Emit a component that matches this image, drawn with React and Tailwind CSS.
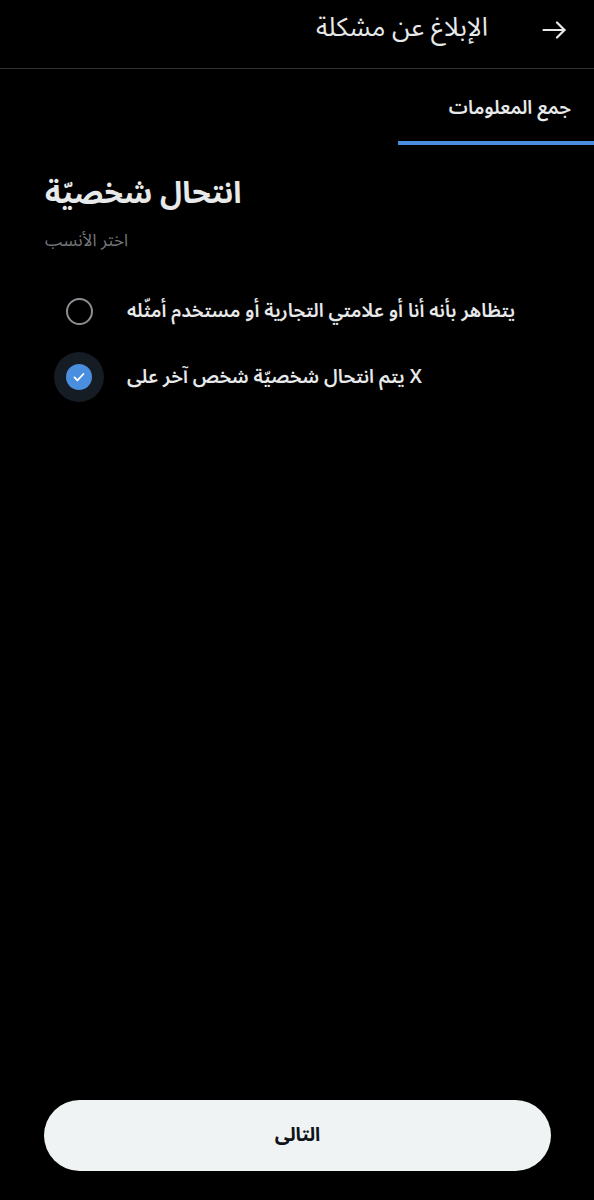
import React from "react";

const font = { fontFamily: '"Noto Sans Arabic", "DejaVu Sans", "Noto Sans", sans-serif' };

function Arrow() {
  return (
    <svg width="24" height="18" viewBox="0 0 24 18" fill="none" stroke="#e7e9ea" strokeWidth="2.2" strokeLinecap="round" strokeLinejoin="round">
      <path d="M1.5 9h21" />
      <path d="M15 1.5l7.5 7.5-7.5 7.5" />
    </svg>
  );
}

function Radio({ checked }) {
  if (checked) {
    return (
      <div className="w-[50px] h-[50px] rounded-full bg-[#151c24] flex items-center justify-center shrink-0">
        <div className="w-[26px] h-[26px] rounded-full bg-[#4a8fdf] flex items-center justify-center">
          <svg width="14" height="14" viewBox="0 0 14 14" fill="none" stroke="#ffffff" strokeWidth="1.8" strokeLinecap="round" strokeLinejoin="round">
            <path d="M2.5 7.4l2.9 2.9 6-6.3" />
          </svg>
        </div>
      </div>
    );
  }
  return (
    <div className="w-[50px] h-[50px] flex items-center justify-center shrink-0">
      <div className="w-[27px] h-[27px] rounded-full border-[2px] border-[#8b8e92]" />
    </div>
  );
}

export default function App() {
  return (
    <div className="w-[594px] h-[1200px] bg-black text-[#e7e9ea] flex flex-col" style={font} dir="ltr">
      <div className="h-[69px] pb-[8px] flex items-center justify-end pr-[28px] border-b border-[#2f3336] shrink-0">
        <span className="text-[26px] font-normal leading-none mr-[54px] -mt-[4px]">الإبلاغ عن مشكلة</span>
        <Arrow />
      </div>
      <div className="flex justify-end shrink-0">
        <div className="w-[196px] flex flex-col items-end">
          <div className="h-[72px] pt-[6px] flex items-center pr-[23px]">
            <span className="text-[19px] font-semibold leading-none">جمع المعلومات</span>
          </div>
          <div className="w-full h-[4px] bg-[#4a8fdf]" />
        </div>
      </div>
      <div className="pl-[45px] pt-[27px] shrink-0 text-left">
        <h1 className="text-[30px] font-bold leading-[44px]">انتحال شخصيّة</h1>
        <p className="text-[17px] text-[#71767b] mt-[13px] leading-[24px]">اختر الأنسب</p>
      </div>
      <div className="pl-[54px] pt-[33px] flex flex-col gap-[16px] shrink-0">
        <div className="flex items-center gap-[23px]">
          <Radio />
          <span className="text-[19px] font-semibold leading-[28px]">يتظاهر بأنه أنا أو علامتي التجارية أو مستخدم أمثّله</span>
        </div>
        <div className="flex items-center gap-[23px]">
          <Radio checked />
          <span className="text-[19px] font-semibold leading-[28px]">يتم انتحال شخصيّة شخص آخر على X</span>
        </div>
      </div>
      <div className="mt-auto pr-[43px] pl-[44px] pb-[29px] shrink-0">
        <div className="h-[71px] rounded-full bg-[#eff3f4] flex items-center justify-center">
          <span className="text-[19px] font-bold text-[#0f1419]">التالى</span>
        </div>
      </div>
    </div>
  );
}
